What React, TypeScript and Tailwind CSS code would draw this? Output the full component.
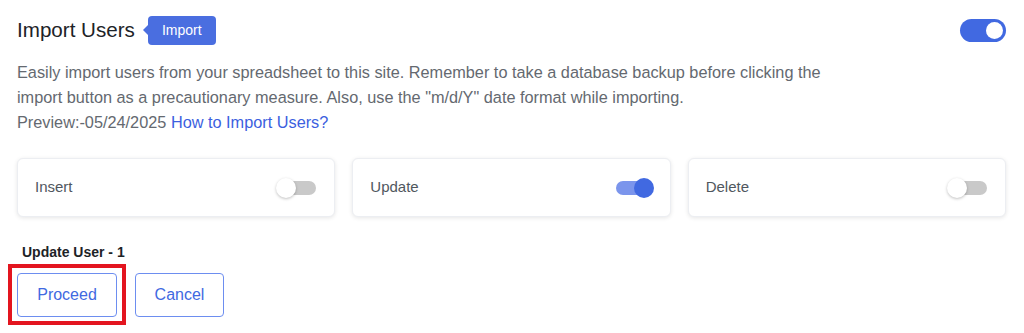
import React from "react";

type SwitchProps = { on: boolean; big?: boolean };

function Switch({ on, big }: SwitchProps) {
  if (big) {
    return (
      <div className="flex h-[23px] w-[46px] items-center justify-end rounded-full bg-[#4169e1] px-[3px]">
        <div className="h-[17px] w-[17px] rounded-full bg-white" />
      </div>
    );
  }
  // material-ish small switch: thin track, knob overhanging
  return (
    <div className={`relative h-[14px] w-[36px] rounded-full ${on ? "bg-[#7b95ec]" : "bg-[#c9c9c9]"}`}>
      <div
        className={`absolute top-[-3px] h-[20px] w-[20px] rounded-full ${
          on ? "right-[-2px] bg-[#4169e1]" : "left-[-4px] bg-white shadow-[0_1px_3px_rgba(0,0,0,0.25)]"
        }`}
      />
    </div>
  );
}

const modes = [
  { label: "Insert", on: false },
  { label: "Update", on: true },
  { label: "Delete", on: false },
];

export default function App() {
  return (
    <div className="h-[333px] w-[1024px] overflow-hidden bg-white px-[17px] pt-[15px] font-['Liberation_Sans',Arial,sans-serif]">
      {/* header */}
      <div className="flex h-[30px] w-[989px] items-center justify-between">
        <div className="flex items-center">
          <h2 className="text-[20.6px] leading-none text-[#1d2327]">Import Users</h2>
          <span className="relative ml-[13px] flex h-[29px] items-center rounded-[4px] bg-[#4a6ee0] px-[14px] text-[14px] text-white">
            <span className="absolute left-[-5px] top-1/2 h-0 w-0 -translate-y-1/2 border-y-[5px] border-r-[5px] border-y-transparent border-r-[#4a6ee0]" />
            Import
          </span>
        </div>
        <Switch on big />
      </div>

      {/* description */}
      <p className="mt-[15px] w-[840px] text-[16.3px] leading-[25px] text-[#646970]">
        Easily import users from your spreadsheet to this site. Remember to take a database backup before clicking the
        import button as a precautionary measure. Also, use the "m/d/Y" date format while importing.
        <br />
        Preview:-05/24/2025 <a className="text-[#3c5fe0]">How to Import Users?</a>
      </p>

      {/* mode cards */}
      <div className="mt-[23px] grid w-[989px] grid-cols-3 gap-[17px]">
        {modes.map((m) => (
          <div
            key={m.label}
            className="flex h-[59px] items-center justify-between rounded-[6px] border border-[#eceef2] bg-white pl-[17px] pr-[18px] shadow-[0_1px_4px_rgba(0,0,0,0.1)]"
          >
            <span className="text-[15px] text-[#50575e]">{m.label}</span>
            <Switch on={m.on} />
          </div>
        ))}
      </div>

      <div className="mt-[25px] pl-[5px] text-[14px] font-bold text-[#1d2327]">Update User - 1</div>

      <div className="mt-[10px] flex gap-[18px]">
        <div className="relative">
          {/* highlight annotation */}
          <span className="absolute -inset-x-[9px] -top-[9px] -bottom-[8px] border-4 border-[#e3151f]" />
          <button className="h-[44px] w-[100px] rounded-[4px] border border-[#6d8ef0] text-[16px] text-[#4169e1]">
            Proceed
          </button>
        </div>
        <button className="h-[44px] w-[89px] rounded-[4px] border border-[#6d8ef0] text-[16px] text-[#4169e1]">
          Cancel
        </button>
      </div>
    </div>
  );
}
